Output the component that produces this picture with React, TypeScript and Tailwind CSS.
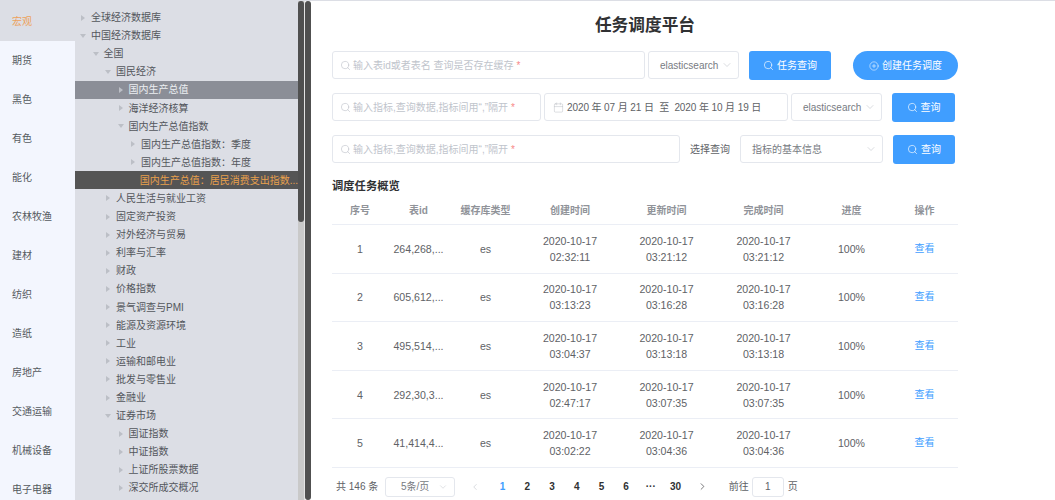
import { Search, CirclePlus, Calendar, ChevronDown, ChevronLeft, ChevronRight } from "lucide-react";

const FONT = "font-['Liberation_Sans','Noto_Sans_CJK_SC',sans-serif]";

const navItems = ["宏观", "期货", "黑色", "有色", "能化", "农林牧渔", "建材", "纺织", "造纸", "房地产", "交通运输", "机械设备", "电子电器"];

type TreeRow = {
  label: string;
  depth: 0 | 1 | 2 | 3 | 4;
  caret?: "right" | "down";
  state?: "hover" | "active";
};

const treeRows: TreeRow[] = [
  { label: "全球经济数据库", depth: 0, caret: "right" },
  { label: "中国经济数据库", depth: 0, caret: "down" },
  { label: "全国", depth: 1, caret: "down" },
  { label: "国民经济", depth: 2, caret: "down" },
  { label: "国内生产总值", depth: 3, caret: "right", state: "hover" },
  { label: "海洋经济核算", depth: 3, caret: "right" },
  { label: "国内生产总值指数", depth: 3, caret: "down" },
  { label: "国内生产总值指数：季度", depth: 4, caret: "right" },
  { label: "国内生产总值指数：年度", depth: 4, caret: "right" },
  { label: "国内生产总值：居民消费支出指数...", depth: 4, state: "active" },
  { label: "人民生活与就业工资", depth: 2, caret: "right" },
  { label: "固定资产投资", depth: 2, caret: "right" },
  { label: "对外经济与贸易", depth: 2, caret: "right" },
  { label: "利率与汇率", depth: 2, caret: "right" },
  { label: "财政", depth: 2, caret: "right" },
  { label: "价格指数", depth: 2, caret: "right" },
  { label: "景气调查与PMI", depth: 2, caret: "right" },
  { label: "能源及资源环境", depth: 2, caret: "right" },
  { label: "工业", depth: 2, caret: "right" },
  { label: "运输和邮电业", depth: 2, caret: "right" },
  { label: "批发与零售业", depth: 2, caret: "right" },
  { label: "金融业", depth: 2, caret: "right" },
  { label: "证券市场", depth: 2, caret: "down" },
  { label: "国证指数", depth: 3, caret: "right" },
  { label: "中证指数", depth: 3, caret: "right" },
  { label: "上证所股票数据", depth: 3, caret: "right" },
  { label: "深交所成交概况", depth: 3, caret: "right" },
];

const depthPadding = ["pl-[5px]", "pl-[17.5px]", "pl-[30px]", "pl-[42.5px]", "pl-[55px]"];

const tasks = [
  { no: 1, id: "264,268,...", created: "02:32:11", updated: "03:21:12", done: "03:21:12" },
  { no: 2, id: "605,612,...", created: "03:13:23", updated: "03:16:28", done: "03:16:28" },
  { no: 3, id: "495,514,...", created: "03:04:37", updated: "03:13:18", done: "03:13:18" },
  { no: 4, id: "292,30,3...", created: "02:47:17", updated: "03:07:35", done: "03:07:35" },
  { no: 5, id: "41,414,4...", created: "03:02:22", updated: "03:04:36", done: "03:04:36" },
];

const COLS = "grid grid-cols-[56px_61px_73px_96px_97px_97px_79px_67px]";

function Caret({ dir }: { dir?: "right" | "down" }) {
  if (dir === "right") return <span className="w-0 h-0 mr-[4px] ml-[1px] border-y-[3.5px] border-y-transparent border-l-[4px] border-l-[#bcbfc6]" />;
  if (dir === "down") return <span className="w-0 h-0 mr-[3px] border-x-[3.5px] border-x-transparent border-t-[4px] border-t-[#bcbfc6]" />;
  return <span className="w-[9px] h-0 mr-[1px]" />;
}

function TreeItem({ row }: { row: TreeRow }) {
  const tone =
    row.state === "hover"
      ? "bg-[#8b8e97] text-[#eceef2]"
      : row.state === "active"
        ? "bg-[#555555] text-[#e8a04c]"
        : "text-[#53565c]";
  return (
    <div className={`h-[18.1px] flex items-center whitespace-nowrap overflow-hidden ${depthPadding[row.depth]} ${tone}`}>
      <Caret dir={row.caret} />
      <span className="ml-[2px]">{row.label}</span>
    </div>
  );
}

function SearchInput({ width, text }: { width: string; text: string }) {
  return (
    <div className={`${width} h-[28px] shrink-0 flex items-center pl-[7px] border border-[#e4e7ed] rounded-[3px] bg-white text-[10px] text-[#c0c4cc]`}>
      <Search size={11} strokeWidth={1.4} className="mr-[2px] shrink-0" />
      <span className="whitespace-nowrap">{text}</span>
      <span className="ml-[3px] text-[#f78989]">*</span>
    </div>
  );
}

function SelectBox({ width, text }: { width: string; text: string }) {
  return (
    <div className={`${width} h-[28px] shrink-0 flex items-center justify-between pl-[11px] pr-[5px] border border-[#e4e7ed] rounded-[3px] bg-white text-[10px] text-[#777b82]`}>
      <span className="whitespace-nowrap">{text}</span>
      <ChevronDown size={12} strokeWidth={1} className="shrink-0 text-[#b4b8c0]" />
    </div>
  );
}

function BlueButton({ width, text }: { width: string; text: string }) {
  return (
    <div className={`${width} h-[29px] shrink-0 flex items-center justify-center gap-[3px] rounded-[3px] bg-[#409eff] text-[10px] text-white`}>
      <Search size={11} strokeWidth={1.4} />
      <span>{text}</span>
    </div>
  );
}

export default function App() {
  return (
    <div className={`${FONT} w-[1055px] h-[500px] overflow-hidden flex flex-col bg-white`}>
      <div className="h-[1px] shrink-0 bg-[#dcdee5]" />
      <div className="flex-1 flex min-h-0">
        {/* category nav */}
        <div className="w-[75px] shrink-0 flex flex-col bg-[#f3f6fe] text-[10px] text-[#555a60]">
          {navItems.map((name, i) => (
            <div key={name} className={`shrink-0 flex items-center pl-[12px] ${i === 0 ? "h-[40px] bg-[#dcdee5] text-[#eda25c]" : "h-[39px]"}`}>
              {name}
            </div>
          ))}
        </div>

        {/* tree */}
        <div className="w-[223px] shrink-0 pt-[7.5px] bg-[#dcdee5] text-[10px] overflow-hidden">
          {treeRows.map((row) => (
            <TreeItem key={row.label} row={row} />
          ))}
        </div>

        {/* scrollbars */}
        <div className="w-[6px] shrink-0 bg-[#c9c9c9]">
          <div className="h-[221px] rounded-[3px] bg-[#505050]" />
        </div>
        <div className="w-[1px] shrink-0 bg-[#e4e4e4]" />
        <div className="w-[6px] shrink-0 rounded-[3px] bg-[#505050]" />

        {/* main */}
        <div className="flex-1 min-w-0 pl-[21px] pr-[97px] text-[#606266]">
          <div className="h-[50px] flex items-center justify-center text-[16.7px] font-bold text-[#303133]">任务调度平台</div>

          <div className="flex items-start">
            <SearchInput width="w-[313px]" text="输入表id或者表名 查询是否存在缓存" />
            <div className="w-[3px] shrink-0" />
            <SelectBox width="w-[91px]" text="elasticsearch" />
            <div className="w-[10px] shrink-0" />
            <BlueButton width="w-[82px]" text="任务查询" />
            <div className="w-[22px] shrink-0" />
            <div className="w-[105px] h-[29px] shrink-0 flex items-center justify-center gap-[3px] rounded-full bg-[#409eff] text-[10px] text-white">
              <CirclePlus size={10} strokeWidth={1.3} />
              <span>创建任务调度</span>
            </div>
          </div>

          <div className="mt-[13px] flex items-start">
            <SearchInput width="w-[209px]" text="输入指标,查询数据,指标间用“,”隔开" />
            <div className="w-[3px] shrink-0" />
            <div className="w-[244px] h-[28px] shrink-0 flex items-center pl-[8px] border border-[#e4e7ed] rounded-[3px] text-[10px] tracking-[-0.1px] text-[#606266]">
              <Calendar size={11} strokeWidth={1} className="mr-[3px] text-[#b4b8c0]" />
              <span className="whitespace-pre">2020 年 07 月 21 日  至  2020 年 10 月 19 日</span>
            </div>
            <div className="w-[3px] shrink-0" />
            <SelectBox width="w-[91px]" text="elasticsearch" />
            <div className="w-[10px] shrink-0" />
            <BlueButton width="w-[63px]" text="查询" />
          </div>

          <div className="mt-[13px] flex items-start">
            <SearchInput width="w-[348px]" text="输入指标,查询数据,指标间用“,”隔开" />
            <div className="w-[10px] shrink-0" />
            <div className="w-[40px] h-[28px] shrink-0 flex items-center text-[10px] whitespace-nowrap text-[#606266]">选择查询</div>
            <div className="w-[10px] shrink-0" />
            <SelectBox width="w-[143px]" text="指标的基本信息" />
            <div className="w-[10px] shrink-0" />
            <BlueButton width="w-[62px]" text="查询" />
          </div>

          <div className="mt-[15px] h-[14px] flex items-center text-[11.3px] font-bold text-[#303133]">调度任务概览</div>

          {/* table */}
          <div className={`${COLS} mt-[4px] h-[28px] items-center border-b border-[#ebeef5] text-center text-[10px] font-bold text-[#909399]`}>
            <span>序号</span>
            <span>表id</span>
            <span>缓存库类型</span>
            <span>创建时间</span>
            <span>更新时间</span>
            <span>完成时间</span>
            <span>进度</span>
            <span>操作</span>
          </div>
          {tasks.map((t) => (
            <div key={t.no} className={`${COLS} h-[48.6px] items-center border-b border-[#ebeef5] text-center text-[10.6px] leading-[16px] text-[#606266]`}>
              <span>{t.no}</span>
              <span>{t.id}</span>
              <span>es</span>
              <span>2020-10-17<br />{t.created}</span>
              <span>2020-10-17<br />{t.updated}</span>
              <span>2020-10-17<br />{t.done}</span>
              <span>100%</span>
              <span className="text-[10px] text-[#409eff]">查看</span>
            </div>
          ))}

          {/* pagination */}
          <div className="mt-[9px] h-[20px] flex items-center text-[10px] text-[#606266]">
            <span className="ml-[4px] w-[49px] shrink-0">共 146 条</span>
            <div className="w-[70px] h-[20px] shrink-0 flex items-center justify-between pl-[15px] pr-[6px] border border-[#e4e7ed] rounded-[3px] text-[#777b82]">
              <span>5条/页</span>
              <ChevronDown size={10} strokeWidth={1} className="shrink-0 text-[#b4b8c0]" />
            </div>
            <ChevronLeft size={10} strokeWidth={1.2} className="ml-[15px] text-[#b4b8c0]" />
            <div className="ml-[10px] flex items-center font-bold text-[#303133]">
              <span className="w-[25px] text-center text-[#409eff]">1</span>
              <span className="w-[24.7px] text-center">2</span>
              <span className="w-[24.7px] text-center">3</span>
              <span className="w-[24.7px] text-center">4</span>
              <span className="w-[24.7px] text-center">5</span>
              <span className="w-[24.7px] text-center">6</span>
              <span className="w-[24.7px] text-center">···</span>
              <span className="w-[24.7px] text-center">30</span>
            </div>
            <ChevronRight size={11} strokeWidth={1.4} className="ml-[9px] text-[#303133]" />
            <span className="ml-[21px]">前往</span>
            <div className="ml-[3px] w-[32px] h-[20px] flex items-center justify-center border border-[#e4e7ed] rounded-[3px]">1</div>
            <span className="ml-[4px]">页</span>
          </div>
        </div>
      </div>
    </div>
  );
}
